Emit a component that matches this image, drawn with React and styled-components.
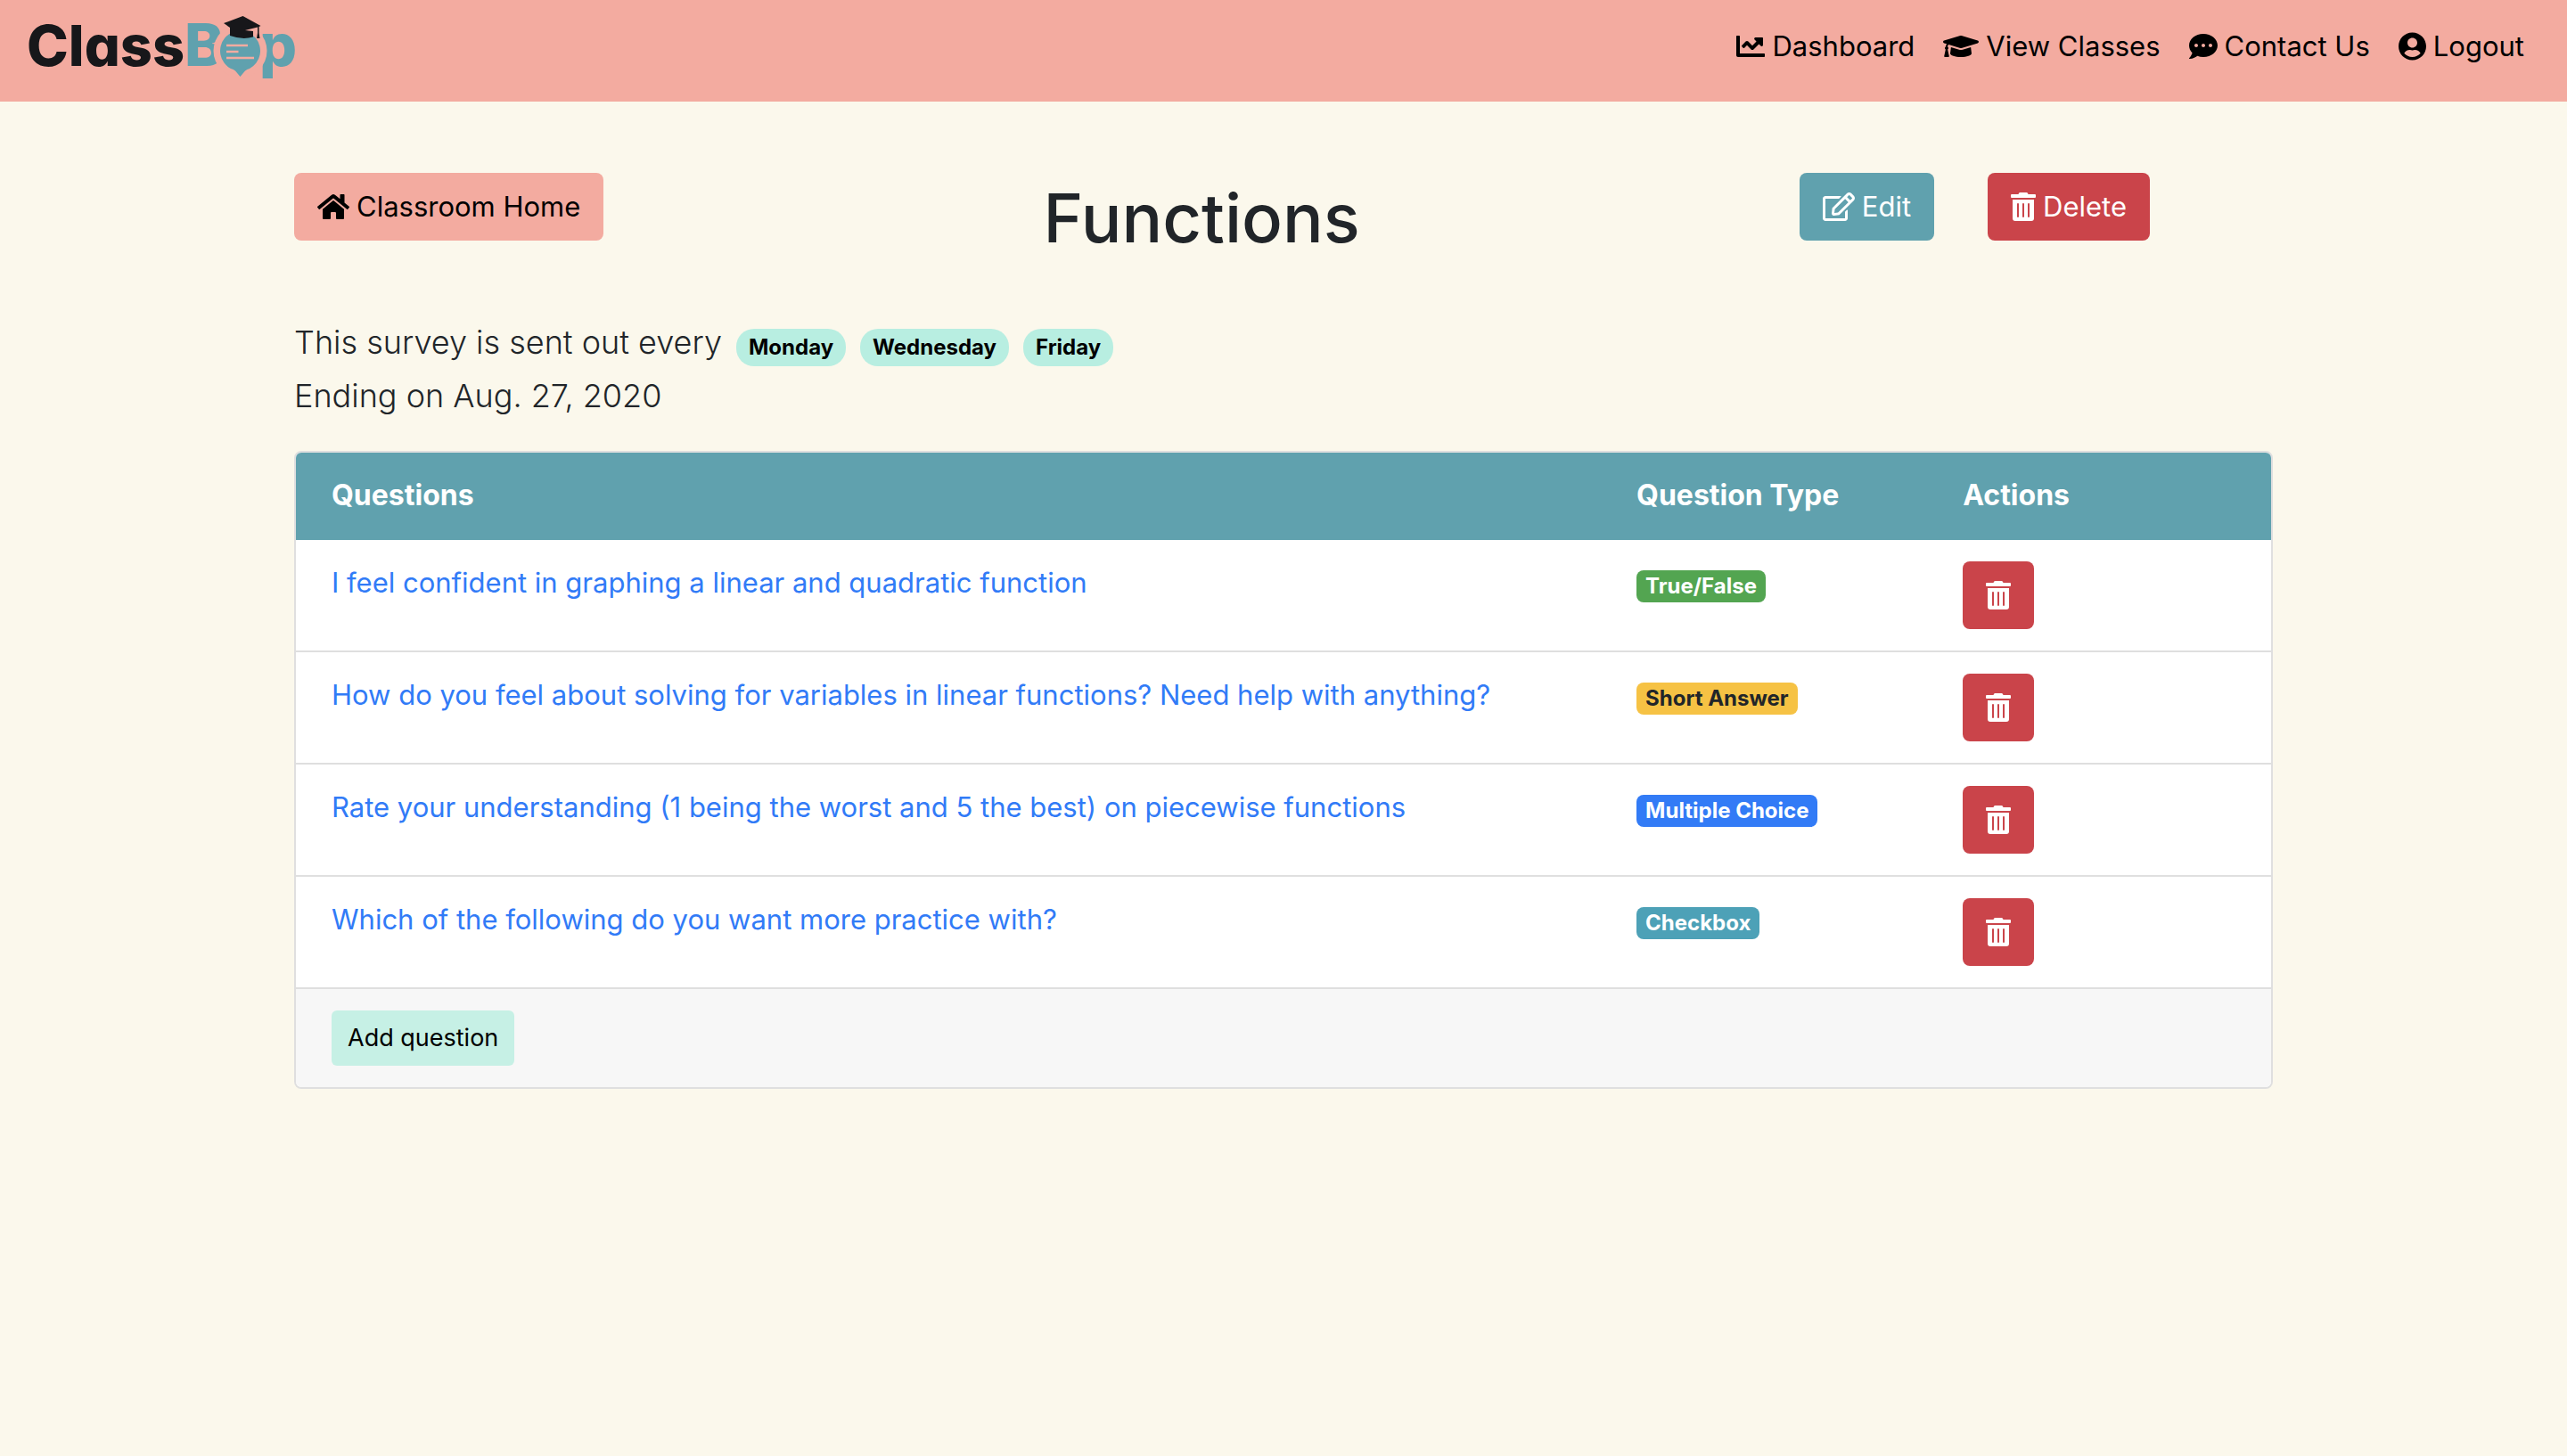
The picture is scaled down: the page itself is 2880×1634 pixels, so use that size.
import React from "react";
import styled, { createGlobalStyle } from "styled-components";
import {
  FaChartLine,
  FaGraduationCap,
  FaCommentDots,
  FaUserCircle,
  FaHome,
  FaRegEdit,
  FaTrashAlt,
} from "react-icons/fa";

const GlobalStyle = createGlobalStyle`
  *, *::before, *::after { box-sizing: border-box; }
  body {
    margin: 0;
    background: #fbf8ec;
    color: #212529;
    font-family: Inter, "Liberation Sans", sans-serif;
    font-size: 31px;
    line-height: 48px;
  }
`;

const Navbar = styled.header`
  display: flex;
  align-items: center;
  justify-content: space-between;
  padding: 12px 32px 22px;
  background: #f3aba0;
`;

const Brand = styled.a`
  display: block;
  height: 72px;
`;

const NavLinks = styled.nav`
  display: flex;
`;

const NavLink = styled.a`
  display: flex;
  align-items: center;
  gap: 8px;
  padding: 16px;
  color: #000;
  text-decoration: none;
`;

const Icon = styled.span`
  display: inline-flex;
  width: ${(p) => p.$width}px;
  height: 32px;

  svg {
    width: 100%;
    height: 100%;
  }
`;

const Container = styled.main`
  max-width: 2280px;
  margin: 0 auto;
  padding: 80px 30px;
`;

const TitleBar = styled.div`
  display: flex;
  align-items: flex-start;
  gap: 60px;
  padding-right: 138px;
`;

const Title = styled.h1`
  flex: 1;
  margin: 0;
  font-size: 76px;
  line-height: 100px;
  font-weight: 500;
  text-align: center;
`;

const tones = {
  pink: ["#f3aba0", "#000"],
  teal: ["#60a1ae", "#fff"],
  red: ["#ca444a", "#fff"],
  mint: ["#c6f0e5", "#000"],
};

const Button = styled.button`
  display: inline-flex;
  align-items: center;
  gap: 8px;
  padding: 14px 26px;
  border: 0;
  border-radius: 8px;
  background: ${(p) => tones[p.$tone][0]};
  color: ${(p) => tones[p.$tone][1]};
  font: inherit;
  white-space: nowrap;
  cursor: pointer;
`;

const SmallButton = styled(Button)`
  padding: 10px 18px;
  border-radius: 6px;
  font-size: 27px;
  line-height: 42px;
`;

const Schedule = styled.section`
  margin: 60px 0 32px;
  font-size: 36px;
  line-height: 60px;
  font-weight: 300;
`;

const ScheduleLine = styled.div`
  display: flex;
  align-items: center;
  gap: 16px;
`;

const DayPill = styled.span`
  margin-top: 12px;
  padding: 6px 14px;
  border-radius: 20px;
  background: #b8eee1;
  color: #000;
  font-size: 24px;
  line-height: 30px;
  font-weight: 700;
`;

const Card = styled.section`
  overflow: hidden;
  border: 2px solid #dfdfdf;
  border-radius: 8px;
  background: #fff;
`;

const Table = styled.table`
  width: 100%;
  table-layout: fixed;
  border-collapse: separate;
  border-spacing: 0;
`;

const Column = styled.col`
  width: ${(p) => p.$share};
`;

const HeadCell = styled.th`
  padding: 24px 30px 26px;
  background: #60a1ae;
  color: #fff;
  font-size: 32px;
  font-weight: 700;
  text-align: left;

  &:first-child {
    padding-left: 40px;
  }
`;

const Cell = styled.td`
  padding: 24px 30px;
  border-bottom: 2px solid #dfdfdf;
  vertical-align: top;

  &:first-child {
    padding-left: 40px;
  }

  ${Button} {
    display: flex;
    padding: 22px 26px;
  }
`;

const QuestionLink = styled.a`
  color: #317bf7;
  text-decoration: none;
`;

const badgeTones = {
  "True/False": ["#53a551", "#fff"],
  "Short Answer": ["#f6c244", "#212529"],
  "Multiple Choice": ["#327bf6", "#fff"],
  Checkbox: ["#4da1b7", "#fff"],
};

const Badge = styled.span`
  display: block;
  width: fit-content;
  margin-top: 10px;
  padding: 3px 10px;
  border-radius: 8px;
  background: ${(p) => badgeTones[p.$type][0]};
  color: ${(p) => badgeTones[p.$type][1]};
  font-size: 24px;
  line-height: 30px;
  font-weight: 700;
`;

const CardFooter = styled.footer`
  display: flex;
  padding: 24px 40px;
  background: #f7f7f7;
`;

const LogoArt = styled.svg`
  display: block;
  width: 300px;
  height: 72px;
  overflow: visible;
`;

const LogoText = styled.text`
  font-family: Inter, sans-serif;
  font-feature-settings: "cv11";
  font-weight: 800;
  font-size: ${(p) => p.$size}px;
`;

function Logo() {
  return (
    <LogoArt viewBox="0 0 300 72" role="img" aria-label="ClassBop">
      <LogoText $size={63} x="-2" y="58" fill="#17171a">Class</LogoText>
      <LogoText $size={66} x="175" y="58" fill="#60a1ae">B</LogoText>
      <LogoText $size={66} x="259" y="58" fill="#60a1ae">p</LogoText>
      <circle cx="237.500" cy="41" r="30" fill="#f3aba0" />
      <path
        d="M237.500 70 L232 63.500 Q230 61.500 227 61 A22.500 22.500 0 1 1 248 61 Q245 61.500 243 63.500 Z"
        fill="#60a1ae"
      />
      <path d="M222 35h24M222 42h13.500M222 49h31" stroke="#f3aba0" strokeWidth="2.500" />
      <path
        d="M240.500 2 L260.500 13 L258.500 14 V21 L259.500 27 H256 L257 21 V14.500 L243 18 L252 19 V25.500 Q240 29 226 24 V15 L219 10 Z"
        fill="#17171a"
      />
    </LogoArt>
  );
}

const navItems = [
  { label: "Dashboard", icon: FaChartLine, width: 32 },
  { label: "View Classes", icon: FaGraduationCap, width: 40 },
  { label: "Contact Us", icon: FaCommentDots, width: 32 },
  { label: "Logout", icon: FaUserCircle, width: 31 },
];

const days = ["Monday", "Wednesday", "Friday"];

const questions = [
  { text: "I feel confident in graphing a linear and quadratic function", type: "True/False" },
  {
    text: "How do you feel about solving for variables in linear functions? Need help with anything?",
    type: "Short Answer",
  },
  {
    text: "Rate your understanding (1 being the worst and 5 the best) on piecewise functions",
    type: "Multiple Choice",
  },
  { text: "Which of the following do you want more practice with?", type: "Checkbox" },
];

export default function App() {
  return (
    <>
      <GlobalStyle />
      <Navbar>
        <Brand href="#">
          <Logo />
        </Brand>
        <NavLinks>
          {navItems.map(({ label, icon: Glyph, width }) => (
            <NavLink href="#" key={label}>
              <Icon $width={width}><Glyph /></Icon>
              {label}
            </NavLink>
          ))}
        </NavLinks>
      </Navbar>
      <Container>
        <TitleBar>
          <Button type="button" $tone="pink">
            <Icon $width={36}><FaHome /></Icon>
            Classroom Home
          </Button>
          <Title>Functions</Title>
          <Button type="button" $tone="teal">
            <Icon $width={36}><FaRegEdit /></Icon>
            Edit
          </Button>
          <Button type="button" $tone="red">
            <Icon $width={28}><FaTrashAlt /></Icon>
            Delete
          </Button>
        </TitleBar>
        <Schedule>
          <ScheduleLine>
            This survey is sent out every
            {days.map((day) => (
              <DayPill key={day}>{day}</DayPill>
            ))}
          </ScheduleLine>
          <ScheduleLine>Ending on Aug. 27, 2020</ScheduleLine>
        </Schedule>
        <Card>
          <Table>
            <colgroup>
              <Column $share="66.52%" />
              <Column $share="16.52%" />
              <Column $share="16.96%" />
            </colgroup>
            <thead>
              <tr>
                <HeadCell scope="col">Questions</HeadCell>
                <HeadCell scope="col">Question Type</HeadCell>
                <HeadCell scope="col">Actions</HeadCell>
              </tr>
            </thead>
            <tbody>
              {questions.map(({ text, type }) => (
                <tr key={type}>
                  <Cell><QuestionLink href="#">{text}</QuestionLink></Cell>
                  <Cell><Badge $type={type}>{type}</Badge></Cell>
                  <Cell>
                    <Button type="button" $tone="red" aria-label="Delete question">
                      <Icon $width={28}><FaTrashAlt /></Icon>
                    </Button>
                  </Cell>
                </tr>
              ))}
            </tbody>
          </Table>
          <CardFooter>
            <SmallButton type="button" $tone="mint">Add question</SmallButton>
          </CardFooter>
        </Card>
      </Container>
    </>
  );
}
